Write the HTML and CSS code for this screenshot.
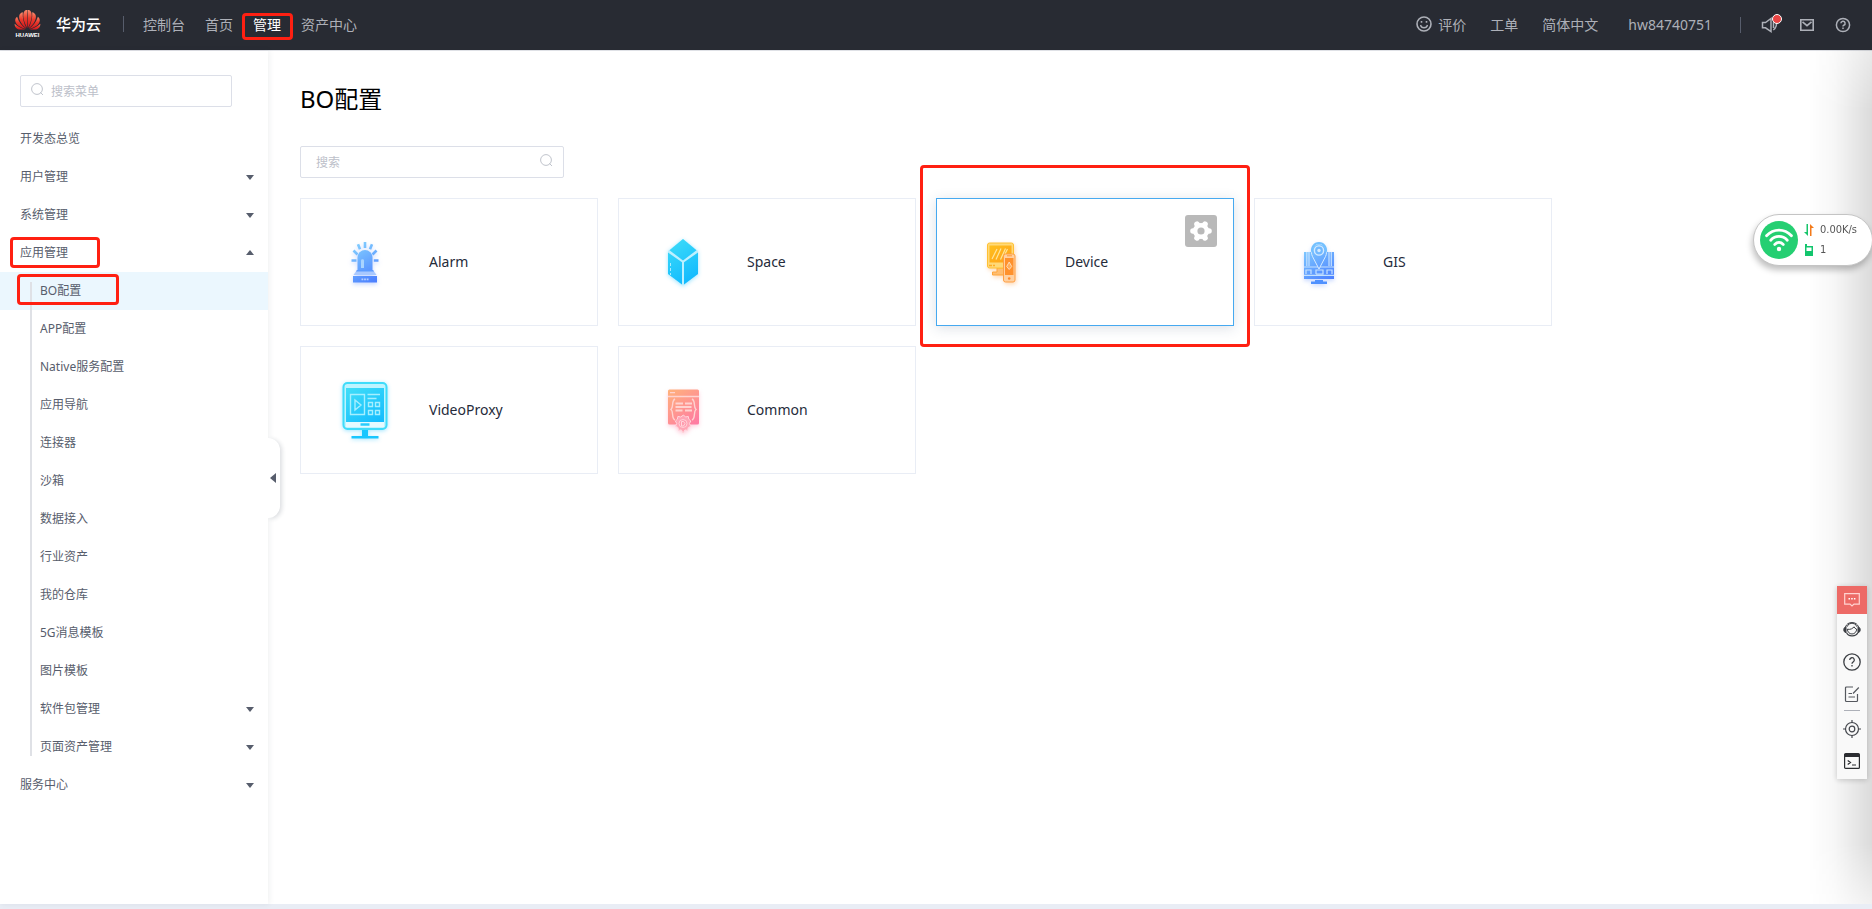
FILE: index.html
```html
<!DOCTYPE html>
<html lang="zh-CN">
<head>
<meta charset="utf-8">
<title>BO配置</title>
<link rel="stylesheet" href="styles.css">
</head>
<body>
<header class="topbar">
  <a class="brand" href="#">
    <svg class="brand-logo" viewBox="0 0 26 28" aria-hidden="true">
      <defs><linearGradient id="petal" x1="0" y1="0" x2="0" y2="1"><stop offset="0" stop-color="#fa8a6c"/><stop offset=".45" stop-color="#ea3a2c"/><stop offset="1" stop-color="#d4151b"/></linearGradient></defs>
      <g fill="url(#petal)">
        <path d="M12.700 18C8.500 11 7.500 3 10.500 .6c1-.5 2-.6 2.300-.5z"/>
        <path d="M13.300 18C17.500 11 18.500 3 15.500 .6c-1-.5-2-.6-2.300-.5z"/>
        <path d="M12 18.300C6 14 3.700 8.500 4.900 5c.6-1.400 1.900-2.400 3.400-2.700C7.800 8 9.300 13.500 12 18.300z"/>
        <path d="M14 18.300c6-4.300 8.300-9.800 7.100-13.300-.6-1.400-1.900-2.400-3.400-2.700.5 5.700-1 11.200-3.700 16z"/>
        <path d="M11.500 18.800C4 17.500 .7 13.500 .7 10.300c0-1.500.8-2.800 1.900-3.600C4.300 12 7.500 15.800 11.500 18.800z"/>
        <path d="M14.500 18.800c7.500-1.300 10.800-5.300 10.800-8.500 0-1.500-.8-2.800-1.900-3.600-1.700 5.300-4.900 9.100-8.900 12.100z"/>
        <path d="M10.800 19.400H4.300C1.800 19 .1 17 .1 13.800c3.200 2.800 6.600 4.600 10.700 5.600z"/>
        <path d="M15.200 19.400h6.500c2.500-.4 4.200-2.400 4.200-5.600-3.200 2.800-6.600 4.600-10.700 5.600z"/>
      </g>
      <text x="13" y="27" class="brand-word">HUAWEI</text>
    </svg>
    <span class="brand-name">华为云</span>
  </a>
  <span class="bar-rule"></span>
  <nav class="main-nav">
    <a href="#">控制台</a>
    <a href="#">首页</a>
    <a href="#" class="current marked marked-nav">管理</a>
    <a href="#">资产中心</a>
  </nav>
  <div class="links">
    <a class="rate" href="#">
      <svg width="16" height="16" viewBox="0 0 16 16" fill="none" stroke="currentColor" stroke-width="1.600" aria-hidden="true"><circle cx="8" cy="8" r="7"/><path d="M4.500 9a3.600 3.600 0 0 0 7 0" stroke-width="1.300"/><path d="M5.500 5v1.800M10.500 5v1.800"/></svg>
      评价</a>
    <a href="#">工单</a>
    <a href="#">简体中文</a>
    <a class="user" href="#">hw84740751</a>
  </div>
  <div class="tools">
    <span class="bar-rule"></span>
    <button class="icon-button" aria-label="公告">
      <svg width="18" height="18" viewBox="0 0 18 18" fill="none" stroke="currentColor" stroke-width="1.500" aria-hidden="true"><path d="M1.500 6.500h3L10 2.500v13l-5.500-3.700h-3z"/><path d="M12.500 6v6M15 5.500c1 3-.2 6.500-2.700 8.500"/></svg>
      <span class="dot"></span>
    </button>
    <button class="icon-button" aria-label="邮件"><svg width="16" height="14" viewBox="0 0 16 14" fill="none" stroke="currentColor" stroke-width="1.600" aria-hidden="true"><path d="M1.800 1.800h12.400v10.400H1.800z"/><path d="M3.500 3.800L8 7.600l4.500-3.800"/></svg></button>
    <button class="icon-button" aria-label="帮助"><svg width="16" height="16" viewBox="0 0 16 16" fill="none" stroke="currentColor" stroke-width="1.500" aria-hidden="true"><circle cx="8" cy="8" r="6.600"/><path d="M5.900 6.300a2.100 2.100 0 1 1 2.900 1.900c-.6.300-.8.600-.8 1.300M8 10.500V12"/></svg></button>
  </div>
</header>

<div class="shell">
  <aside class="sidebar">
    <label class="field menu-search">
      <svg width="13" height="13" viewBox="0 0 13 13" fill="none" stroke="currentColor" aria-hidden="true"><circle cx="6" cy="6" r="5.400"/><path d="M9.300 9.300l2.700 2.700"/></svg>
      <input type="text" placeholder="搜索菜单" aria-label="搜索菜单">
    </label>
    <nav>
      <ul class="menu">
        <li><a class="item" href="#">开发态总览</a></li>
        <li><button class="item">用户管理<span class="caret"></span></button></li>
        <li><button class="item">系统管理<span class="caret"></span></button></li>
        <li><button class="item marked marked-group" aria-expanded="true">应用管理<span class="caret caret-up"></span></button>
          <ul class="submenu">
            <li><a class="item selected marked marked-item" href="#">BO配置</a></li>
            <li><a class="item" href="#">APP配置</a></li>
            <li><a class="item" href="#">Native服务配置</a></li>
            <li><a class="item" href="#">应用导航</a></li>
            <li><a class="item" href="#">连接器</a></li>
            <li><a class="item" href="#">沙箱</a></li>
            <li><a class="item" href="#">数据接入</a></li>
            <li><a class="item" href="#">行业资产</a></li>
            <li><a class="item" href="#">我的仓库</a></li>
            <li><a class="item" href="#">5G消息模板</a></li>
            <li><a class="item" href="#">图片模板</a></li>
            <li><button class="item">软件包管理<span class="caret"></span></button></li>
            <li><button class="item">页面资产管理<span class="caret"></span></button></li>
          </ul>
        </li>
        <li><button class="item">服务中心<span class="caret"></span></button></li>
      </ul>
    </nav>
    <button class="collapse" aria-label="收起菜单"><span class="caret-left"></span></button>
  </aside>

  <main class="content">
    <h1>BO配置</h1>
    <label class="field bo-search">
      <input type="text" placeholder="搜索" aria-label="搜索">
      <svg width="13" height="13" viewBox="0 0 13 13" fill="none" stroke="currentColor" aria-hidden="true"><circle cx="6" cy="6" r="5.400"/><path d="M9.300 9.300l2.700 2.700"/></svg>
    </label>
    <div class="cards">
      <article class="card">
        <svg class="pic glow-blue" viewBox="0 0 64 64" aria-hidden="true">
          <defs><linearGradient id="lamp" gradientUnits="userSpaceOnUse" x1="20" y1="12" x2="44" y2="52"><stop offset="0" stop-color="#86d4ff"/><stop offset="1" stop-color="#4a7dff"/></linearGradient></defs>
          <path d="M24.500 40V27.500a7.500 7.500 0 0 1 15 0V40z" fill="url(#lamp)"/>
          <path d="M24 40h16l3.500 5h-23z" fill="#a8c8ff"/><path d="M24 40h16l1 1.500H23z" fill="#5c9bff"/>
          <path d="M20 46h24v6.500H20z" fill="url(#lamp)"/>
          <path d="M28 30.500c0-1.800 3-1.800 3 0V38h-3z" fill="#a9d4ff"/>
          <path d="M28.500 49.300h7" stroke="#b5ceff" stroke-width="1.800" stroke-dasharray="1.800 .8"/>
          <g stroke="url(#lamp)" stroke-width="2.600"><path d="M32.010 12l-.01 6M25 14.300l2 5M39 14.300l-2 5M20.500 20.500l4 4M43.500 20.500l-4 4M18.500 30.500l5 .01M40.800 30.500l4.700 .01"/></g>
        </svg>
        <h2>Alarm</h2>
      </article>
      <article class="card">
        <svg class="pic glow-cyan" viewBox="0 0 64 64" aria-hidden="true">
          <defs><linearGradient id="cyan" gradientUnits="userSpaceOnUse" x1="18" y1="10" x2="46" y2="54"><stop offset="0" stop-color="#3edcf8"/><stop offset="1" stop-color="#0cb6ff"/></linearGradient></defs>
          <path d="M32 9l15 12v23L32 55.500 17 44V21z" fill="#bdf0ff"/>
          <path d="M32 9l13.500 11.200L32 30.500 18.500 20.200zM17 22.500l14 9.800v22.300L17 44zM47 22.500v21.500L33 54.600V32.300z" fill="url(#cyan)"/>
          <path d="M19.500 33v12" stroke="#a9ecff" stroke-width="1" stroke-dasharray="3 2"/>
        </svg>
        <h2>Space</h2>
      </article>
      <article class="card active marked marked-card">
        <svg class="pic glow-orange" viewBox="0 0 64 64" aria-hidden="true">
          <defs><linearGradient id="orange" gradientUnits="userSpaceOnUse" x1="18" y1="12" x2="46" y2="52"><stop offset="0" stop-color="#ffc51c"/><stop offset="1" stop-color="#ff8a1c"/></linearGradient></defs>
          <path d="M28 38v4h-4.500v3H35v-7z" fill="#ffbd70" stroke="#ffa53a"/>
          <rect x="18.500" y="13" width="26" height="25" rx="2" fill="#ffd978" stroke="#ffc133"/>
          <path d="M20.500 15.500h22v17h-22z" fill="url(#orange)"/>
          <path d="M23 29l5-10M27 29.500l5-11M31.500 29.500l5-11M36 24l2.500-5" stroke="#ffe59b" stroke-width="1.200"/>
          <path d="M20 35.500h6" stroke="#ffad24" stroke-width="1.500" stroke-dasharray="3 1"/>
          <rect x="34.500" y="24" width="11.500" height="28" rx="2" fill="#ffd0a0" stroke="#ff9f42"/>
          <path d="M36 28h8.500v17H36z" fill="#ff912c"/>
          <path d="M38 25.800h5" stroke="#ff9b3a"/><circle cx="40.200" cy="48.500" r="1.300" fill="#ff8a2a"/>
          <path d="M40.200 32l2.500 4.500-2.500 3-2.500-3z" fill="#ffad59" stroke="#ffdbb5"/>
        </svg>
        <h2>Device</h2>
        <button class="gear" aria-label="设置">
          <svg width="24" height="24" viewBox="0 0 24 24" aria-hidden="true">
            <g stroke="#fff" stroke-width="5.600" stroke-linecap="round"><path d="M4 12h16M8 5.070l8 13.860M16 5.070L8 18.930"/></g>
            <circle cx="12" cy="12" r="8" fill="#fff"/><circle cx="12" cy="12" r="3.600" fill="#b9b9b9"/>
          </svg>
        </button>
      </article>
      <article class="card">
        <svg class="pic glow-blue" viewBox="0 0 64 64" aria-hidden="true">
          <path d="M17 22h30v27H17z" fill="url(#lamp)"/>
          <g fill="none" stroke="#c5e2ff"><path d="M19.800 22v14M22 22v14M42 22v14M44.300 22v14M17 37h30M19 44v-4h5v4M29 44v-4h7v4h-7M40 44v-4h5v4M17 45.300h30" stroke-width="1.200"/></g>
          <path d="M28 50h8v1.500h4V54H24v-2.500h4z" fill="#4f91ff"/>
          <path d="M32 39l-6.500-12.500a7.500 8.500 0 1 1 13 0z" fill="url(#lamp)" stroke="#d7ecff"/>
          <path d="M25.300 22a7 7 0 1 1 13.400 0" fill="none" stroke="#72c0ff" stroke-width="2"/>
          <circle cx="32" cy="20.500" r="4.600" fill="#72b9ff" stroke="#d3eaff" stroke-width="1.400"/><circle cx="32" cy="20.500" r="1.700" fill="#d3eaff"/>
        </svg>
        <h2>GIS</h2>
      </article>
      <article class="card">
        <svg class="pic glow-cyan" viewBox="0 0 64 64" aria-hidden="true">
          <rect x="10.500" y="5" width="43" height="46" rx="4" fill="#bdf4ff" stroke="#3fdcfa" stroke-width="2"/>
          <path d="M13 10h38v34H13z" fill="url(#cyan)"/><path d="M13 44h38v5H13z" fill="#e4faff"/>
          <path d="M27.500 46.500h9" stroke="#28ccfc" stroke-width="2.500"/>
          <path d="M29 52h6v6h10.500v2.500h-27V58H29z" fill="#19c6ff"/>
          <g fill="none" stroke="#a5efff" stroke-width="1.400"><path d="M17.500 16.500h14v20h-14zM22 22l6 5-6 5zM34.500 16.500h12.500M34.500 20.500h9M35.500 24.500h4v4h-4zM42.500 24.500h4v4h-4zM35.500 32.500h4v4h-4zM42.500 32.500h4v4h-4z"/></g>
        </svg>
        <h2>VideoProxy</h2>
      </article>
      <article class="card">
        <svg class="pic glow-pink" viewBox="0 0 64 64" aria-hidden="true">
          <defs><linearGradient id="pink" gradientUnits="userSpaceOnUse" x1="18" y1="12" x2="46" y2="48"><stop offset="0" stop-color="#ffb27c"/><stop offset="1" stop-color="#ff78a5"/></linearGradient></defs>
          <rect x="17" y="11.500" width="31" height="35" rx="1.500" fill="url(#pink)"/>
          <g fill="none" stroke="#ffd3d0"><path d="M17 18.500h31M19 14.700h5" stroke-width="1.300"/><path d="M24 21c-4 2-1 8-4 10.500 3 2.500 0 8.500 4 10.500M41 21c4 2 1 8 4 10.500-3 2.500 0 8.500-4 10.500" stroke-width="1.400"/><path d="M24.500 25.500h7.500M34 25.500h7M24.500 29h16M24.500 32.500h7M34 32.500h7" stroke-width="2"/></g>
          <path d="M32.500 37l2 2 2.800-.6.500 2.800 2 1.800-1.300 2.500 1.200 2.800-2.500 1.200-.5 2.800-2.800-.4-1.800 3-1.800-3-2.800.4-.5-2.800-2.500-1.200 1.200-2.800L24.400 43l2-1.800.5-2.800 2.800.6z" fill="#ffa5b5" stroke="#ffd6dc"/>
          <circle cx="32" cy="45.500" r="4" fill="#ff9cae" stroke="#ffd0d8"/><path d="M30.500 43.500h2l1.500 2-1.500 2.500h-2z" fill="none" stroke="#ffd6dc"/>
        </svg>
        <h2>Common</h2>
      </article>
    </div>
  </main>
</div>

<div class="edge-shade"></div>

<section class="net-widget" aria-label="网络状态">
  <svg width="38" height="38" viewBox="0 0 38 38" aria-hidden="true"><circle cx="19" cy="19" r="19" fill="#25cf72"/><g fill="none" stroke="#fff" stroke-width="2.800" stroke-linecap="round"><path d="M6.500 14.800c7-7.600 18-7.600 25 0M10.700 19.200c4.800-5 11.800-5 16.600 0M14.700 23.400c2.600-2.600 6-2.600 8.600 0"/></g><circle cx="19" cy="28" r="2.200" fill="#fff"/></svg>
  <div class="net-lines">
    <p><svg width="10" height="12" viewBox="0 0 10 12" aria-hidden="true"><path d="M2.500 0H4v12L0 8h2.500z" fill="#18c56c"/><path d="M6 12V0l4 4H7.500v8z" fill="#f37a1a"/></svg>0.00K/s</p>
    <p><svg width="10" height="12" viewBox="0 0 10 12" aria-hidden="true"><path d="M1 0h2v2h6v10H1z" fill="#12c56d"/><path d="M2.500 3.500h5V7h-5z" fill="#fff"/></svg>1</p>
  </div>
</section>

<aside class="dock" aria-label="快捷工具">
  <button class="dock-main" aria-label="反馈"><svg width="16" height="14" viewBox="0 0 16 14" fill="none" stroke="#ffd3d1" aria-hidden="true"><path d="M.7 .7h14.600v10.400H10L8 13l-2-1.900H.7z" stroke-width="1.200"/><path d="M4.500 5.800h7" stroke="#fff" stroke-width="1.500" stroke-dasharray="1.500 1.200"/></svg></button>
  <button aria-label="客服"><svg width="18" height="18" viewBox="0 0 18 18" fill="none" stroke="#3c3f44" aria-hidden="true"><path d="M2.500 6a6.800 6.300 0 0 1 13 0M4 5.800a5.200 5 0 0 1 10 0"/><path d="M4.300 8a4.700 5 0 0 0 9.400 0M4.500 8.200C7 9 10 7.500 11 5.800c.6 1.200 1.500 2 2.600 2.400"/><path d="M3 6v5.500C1.500 11.500.8 10.300.8 8.800S1.500 6 3 6zM15 6v5.500c1.500 0 2.200-1.200 2.200-2.700S16.500 6 15 6z" fill="#3c3f44"/><path d="M3.500 11.500c1.500 4 9 5 11.500 0M7.500 15h3" stroke-width="1.200"/></svg></button>
  <button aria-label="帮助"><svg width="18" height="18" viewBox="0 0 18 18" fill="none" stroke="#3c3f44" stroke-width="1.300" aria-hidden="true"><circle cx="9" cy="9" r="8.200"/><path d="M6.700 7a2.300 2.300 0 1 1 3.300 2.100c-.8.400-1 .8-1 1.600M9 12v1.500"/></svg></button>
  <button aria-label="建议"><svg width="16" height="18" viewBox="0 0 16 18" fill="none" stroke="#55585e" stroke-width="1.200" aria-hidden="true"><path d="M9 2H2.500Q1.500 2 1.500 3v12.500q0 1 1 1h10q1 0 1-1V9M14.800 2.500L9 8.500M4.500 8.500h3.500M4.500 12h6.500"/></svg></button>
  <hr>
  <button aria-label="定位"><svg width="18" height="18" viewBox="0 0 18 18" fill="none" stroke="#44474d" stroke-width="1.200" aria-hidden="true"><circle cx="9" cy="9" r="6.500"/><circle cx="9" cy="9" r="2.800"/><path d="M9 0v3M9 15v3M0 9h3M15 9h3"/></svg></button>
  <button aria-label="命令行"><svg width="16" height="16" viewBox="0 0 16 16" fill="none" stroke="#2b2d31" stroke-width="1.200" aria-hidden="true"><rect x=".6" y=".6" width="14.800" height="14.800" rx="1"/><path d="M1 2.500h14" stroke-width="3"/><path d="M3.700 7.500l2.800 2-2.800 2M8 12h4"/></svg></button>
</aside>
</body>
</html>
```

FILE: styles.css
```css
*, *::before, *::after { box-sizing: border-box; }

body {
  margin: 0;
  min-height: 100vh;
  display: flex;
  flex-direction: column;
  overflow-x: hidden;
  background: #fff;
  color: #575d6c;
  font-family: "Noto Sans", "Noto Sans CJK SC", sans-serif;
  font-size: 12px;
}

a { color: inherit; text-decoration: none; }
button, input { font: inherit; color: inherit; }
button { padding: 0; border: 0; background: none; cursor: pointer; }
ul { margin: 0; padding: 0; list-style: none; }
svg { display: block; flex: none; }

/* red highlight frames */
.marked { position: relative; }
.marked::after {
  content: "";
  position: absolute;
  border: 3px solid #ff2012;
  border-radius: 4px;
  pointer-events: none;
  z-index: 3;
}
.marked-nav::after { inset: 0 -12px -4px -11px; }
.marked-group::after { left: 10px; top: 3px; width: 90px; height: 31px; }
.marked-item::after { left: 17px; top: 2px; width: 102px; height: 31px; }
.marked-card::after { inset: -34px -17px -22px; }

/* top bar */
.topbar {
  display: flex;
  align-items: center;
  height: 50px;
  padding: 0 21px 2px 14px;
  background: #282b33;
  color: #adb0b8;
  font-size: 14px;
  line-height: 23px;
  white-space: nowrap;
}
.brand { display: flex; align-items: center; gap: 15px; color: #fff; }
.brand-logo { width: 27px; height: 28px; }
.brand-word { font: bold 6px "Liberation Sans", sans-serif; fill: #fff; text-anchor: middle; }
.brand-name { font-size: 15px; font-weight: 500; }
.bar-rule { width: 1px; height: 16px; background: #575d6c; }
.brand + .bar-rule { margin: 0 19px 0 22px; }
.main-nav { display: flex; gap: 20px; }
.main-nav .current { color: #fff; }
.links { display: flex; align-items: center; gap: 24px; margin-left: auto; }
.rate { display: flex; align-items: center; gap: 6px; }
.user { margin-left: 6px; }
.tools { display: flex; align-items: center; gap: 20px; margin-left: 28px; padding-top: 2px; }
.icon-button { position: relative; }
.dot {
  position: absolute;
  top: -2px;
  right: -3px;
  width: 10px;
  height: 10px;
  border: 1px solid #fff;
  border-radius: 50%;
  background: #e94444;
}

/* page frame */
.shell {
  flex: 1;
  display: flex;
  border-top: 1px solid #dfe1e6;
  border-bottom: 5px solid #e9edf5;
}

/* side menu */
.sidebar {
  position: relative;
  flex: none;
  width: 268px;
  padding-top: 24px;
  background: #fff;
  box-shadow: 1px 0 6px rgba(40, 50, 70, .08);
}
.field {
  display: flex;
  align-items: center;
  height: 32px;
  border: 1px solid #dcdfe8;
  border-radius: 2px;
  color: #c0c4cc;
}
.field svg { margin-bottom: 4px; }
.field input { flex: 1; min-width: 0; padding: 0; border: 0; outline: 0; background: none; color: #252b3a; }
.field input::placeholder { color: #bcc0c9; opacity: 1; }
.menu-search { width: 212px; margin: 0 20px 13px; padding: 0 10px; gap: 7px; }
.item {
  display: flex;
  align-items: center;
  justify-content: space-between;
  width: 100%;
  height: 38px;
  padding: 0 12px 2px 20px;
  text-align: left;
}
.submenu { position: relative; }
.submenu::before {
  content: "";
  position: absolute;
  left: 30px;
  top: 10px;
  bottom: 10px;
  width: 2px;
  background: #dfe1e6;
  z-index: 1;
}
.submenu .item { padding-left: 40px; }
.selected { background: #ebf7fe; }
.caret { margin: 2px 2px 0 0; border: 4px solid transparent; border-top: 5px solid #575d6c; border-bottom: 0; }
.caret-up { margin-top: 0; border-top: 0; border-bottom: 5px solid #575d6c; }
.collapse {
  position: absolute;
  left: 100%;
  top: 387px;
  display: flex;
  align-items: center;
  width: 12px;
  height: 80px;
  padding-left: 2px;
  border-radius: 0 12px 12px 0;
  background: #fff;
  box-shadow: 2px 1px 4px rgba(40, 50, 70, .16);
  clip-path: inset(-8px -8px -8px 0);
}
.caret-left { border: 5px solid transparent; border-right: 6px solid #575d6c; border-left: 0; }

/* main area */
.content { flex: 1; min-width: 0; padding: 30px 60px 31px 32px; }
h1 { margin: 0 0 29px; color: #000; font-size: 24px; font-weight: 400; line-height: 36px; }
.bo-search { width: 264px; margin-bottom: 20px; padding: 0 10px 0 15px; }
.cards { display: grid; grid-template-columns: repeat(auto-fill, 298px); gap: 20px; }
.card {
  display: flex;
  align-items: center;
  gap: 32px;
  height: 128px;
  padding-left: 32px;
  border: 1px solid #e9edf5;
  background: #fff;
}
.card h2 { margin: 0; color: #252b3a; font-size: 14px; font-weight: 400; line-height: 20px; }
.active { border-color: #46a9f0; box-shadow: 0 2px 12px rgba(40, 60, 100, .16); }
.pic { width: 64px; height: 64px; }
.glow-blue { filter: drop-shadow(0 2px 2px rgba(77, 130, 255, .3)); }
.glow-cyan { filter: drop-shadow(0 1px 2px rgba(20, 190, 255, .4)); }
.glow-orange { filter: drop-shadow(1px 2px 2px rgba(255, 150, 50, .35)); }
.glow-pink { filter: drop-shadow(0 2px 2px rgba(255, 120, 160, .35)); }
.gear {
  position: absolute;
  top: 16px;
  right: 16px;
  display: grid;
  place-items: center;
  width: 32px;
  height: 32px;
  border-radius: 3px;
  background: #b9b9b9;
}

/* floating parts on the right edge */
.edge-shade {
  position: fixed;
  top: 50px;
  bottom: 5px;
  right: 0;
  width: 64px;
  background: linear-gradient(to right, transparent, rgba(0, 0, 0, .03) 40%, rgba(0, 0, 0, .14));
  mask-image: linear-gradient(rgba(0, 0, 0, .6), #000 60px, #000 calc(100% - 60px), rgba(0, 0, 0, .4));
  pointer-events: none;
}
.net-widget {
  position: fixed;
  top: 214px;
  right: -1px;
  display: flex;
  align-items: center;
  gap: 6px;
  width: 120px;
  height: 52px;
  padding-left: 6px;
  border: 1px solid #c4c4c4;
  border-radius: 26px;
  background: #fff;
  color: #555;
  box-shadow: -1px 4px 6px rgba(0, 0, 0, .25);
}
.net-lines p { display: flex; align-items: center; gap: 6px; margin: 0; font: 11px/20px "DejaVu Sans Condensed", "DejaVu Sans", sans-serif; }
.dock {
  position: fixed;
  top: 586px;
  right: 5px;
  display: flex;
  flex-direction: column;
  width: 30px;
  padding-bottom: 2px;
  background: #f9f9f9;
  box-shadow: 0 1px 6px rgba(0, 0, 0, .2);
}
.dock button { display: grid; place-items: center; height: 32px; }
.dock .dock-main { height: 28px; background: #ed6a66; }
.dock hr { width: 16px; height: 1px; margin: 0 auto 2px; border: 0; background: #adb0b8; }
```
